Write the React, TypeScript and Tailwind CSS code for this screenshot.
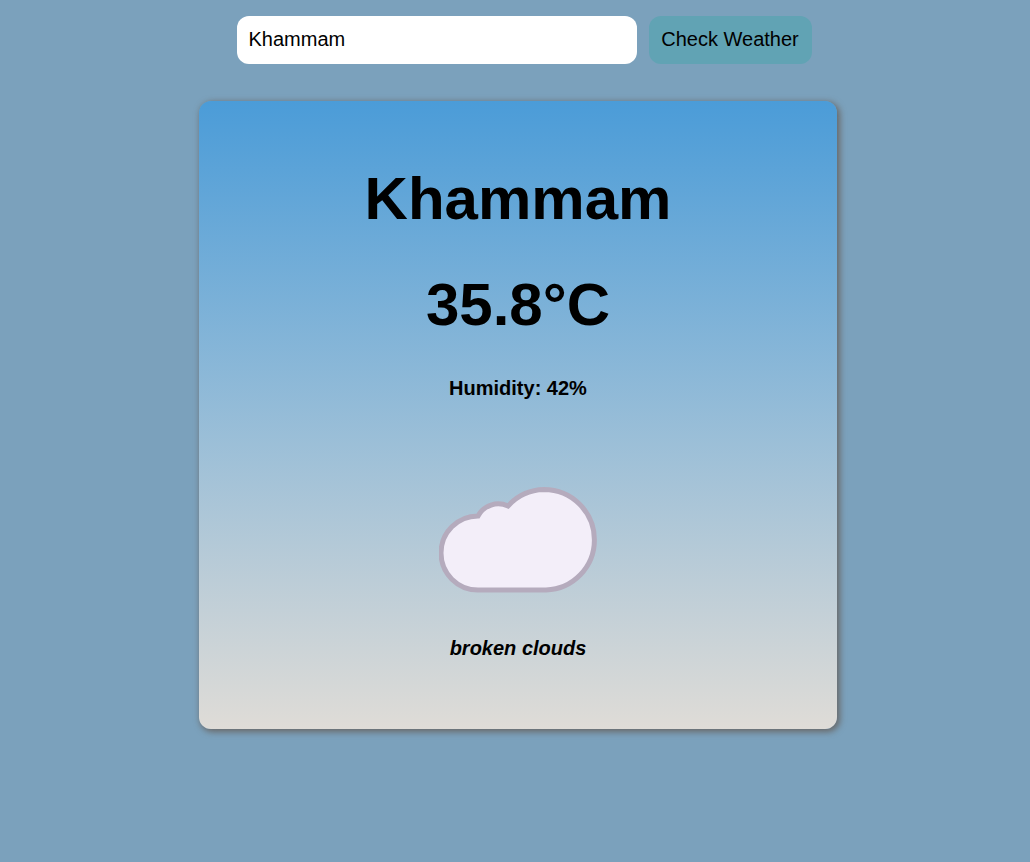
import { useState } from "react";
import type { FormEvent } from "react";

interface Weather {
  city: string;
  temperature: number;
  humidity: number;
  description: string;
}

const initialWeather: Weather = {
  city: "Khammam",
  temperature: 35.8,
  humidity: 42,
  description: "broken clouds",
};

function CloudIcon() {
  return (
    <svg viewBox="0 0 158 158" className="my-0.5 size-[158px]" aria-hidden="true">
      <path
        d="M39 151 A37 37 0 0 1 39 77 A23 23 0 0 1 69 67 A50 50 0 0 1 105 50.5 A50.4 50.4 0 0 1 155.4 101 A50 50 0 0 1 107 151 Z"
        fill="#f3eef9"
        stroke="#b5abbd"
        strokeWidth="5"
      />
    </svg>
  );
}

function WeatherCard({ weather }: { weather: Weather }) {
  return (
    <section className="flex w-full max-w-[638px] flex-col items-center gap-[38px] rounded-xl bg-linear-to-b/srgb from-[#4b9cd8] to-[#dfdcd7] pt-16 pb-[70px] text-center font-bold text-black shadow-[2px_2px_6px_1px_#696969]">
      <h1 className="text-[60px] leading-[68px]">{weather.city}</h1>
      <p className="text-[60px] leading-[68px]">{weather.temperature}°C</p>
      <p className="text-[20px] leading-[22px]">Humidity: {weather.humidity}%</p>
      <CloudIcon />
      <p className="text-[20px] leading-[22px] italic">{weather.description}</p>
    </section>
  );
}

export default function App() {
  const [city, setCity] = useState("Khammam");
  const [weather, setWeather] = useState(initialWeather);

  const handleSubmit = (event: FormEvent) => {
    event.preventDefault();
    if (city.trim()) setWeather({ ...weather, city: city.trim() });
  };

  return (
    <main className="flex min-h-screen flex-col items-center bg-[#7ba1bc] pt-4 pl-1.5 font-['Liberation_Sans',Arial,sans-serif]">
      <form onSubmit={handleSubmit} className="mb-[37px] flex justify-center gap-3 pl-3 text-[20px] leading-6">
        <input
          type="text"
          aria-label="City"
          value={city}
          onChange={(event) => setCity(event.target.value)}
          className="h-12 w-[400px] min-w-0 rounded-xl bg-white px-3 pb-0.5 text-black outline-none"
        />
        <button type="submit" className="h-12 min-w-[163px] shrink-0 rounded-xl bg-[#61a3b4] px-3 pb-0.5 text-black">
          Check Weather
        </button>
      </form>
      <WeatherCard weather={weather} />
    </main>
  );
}
